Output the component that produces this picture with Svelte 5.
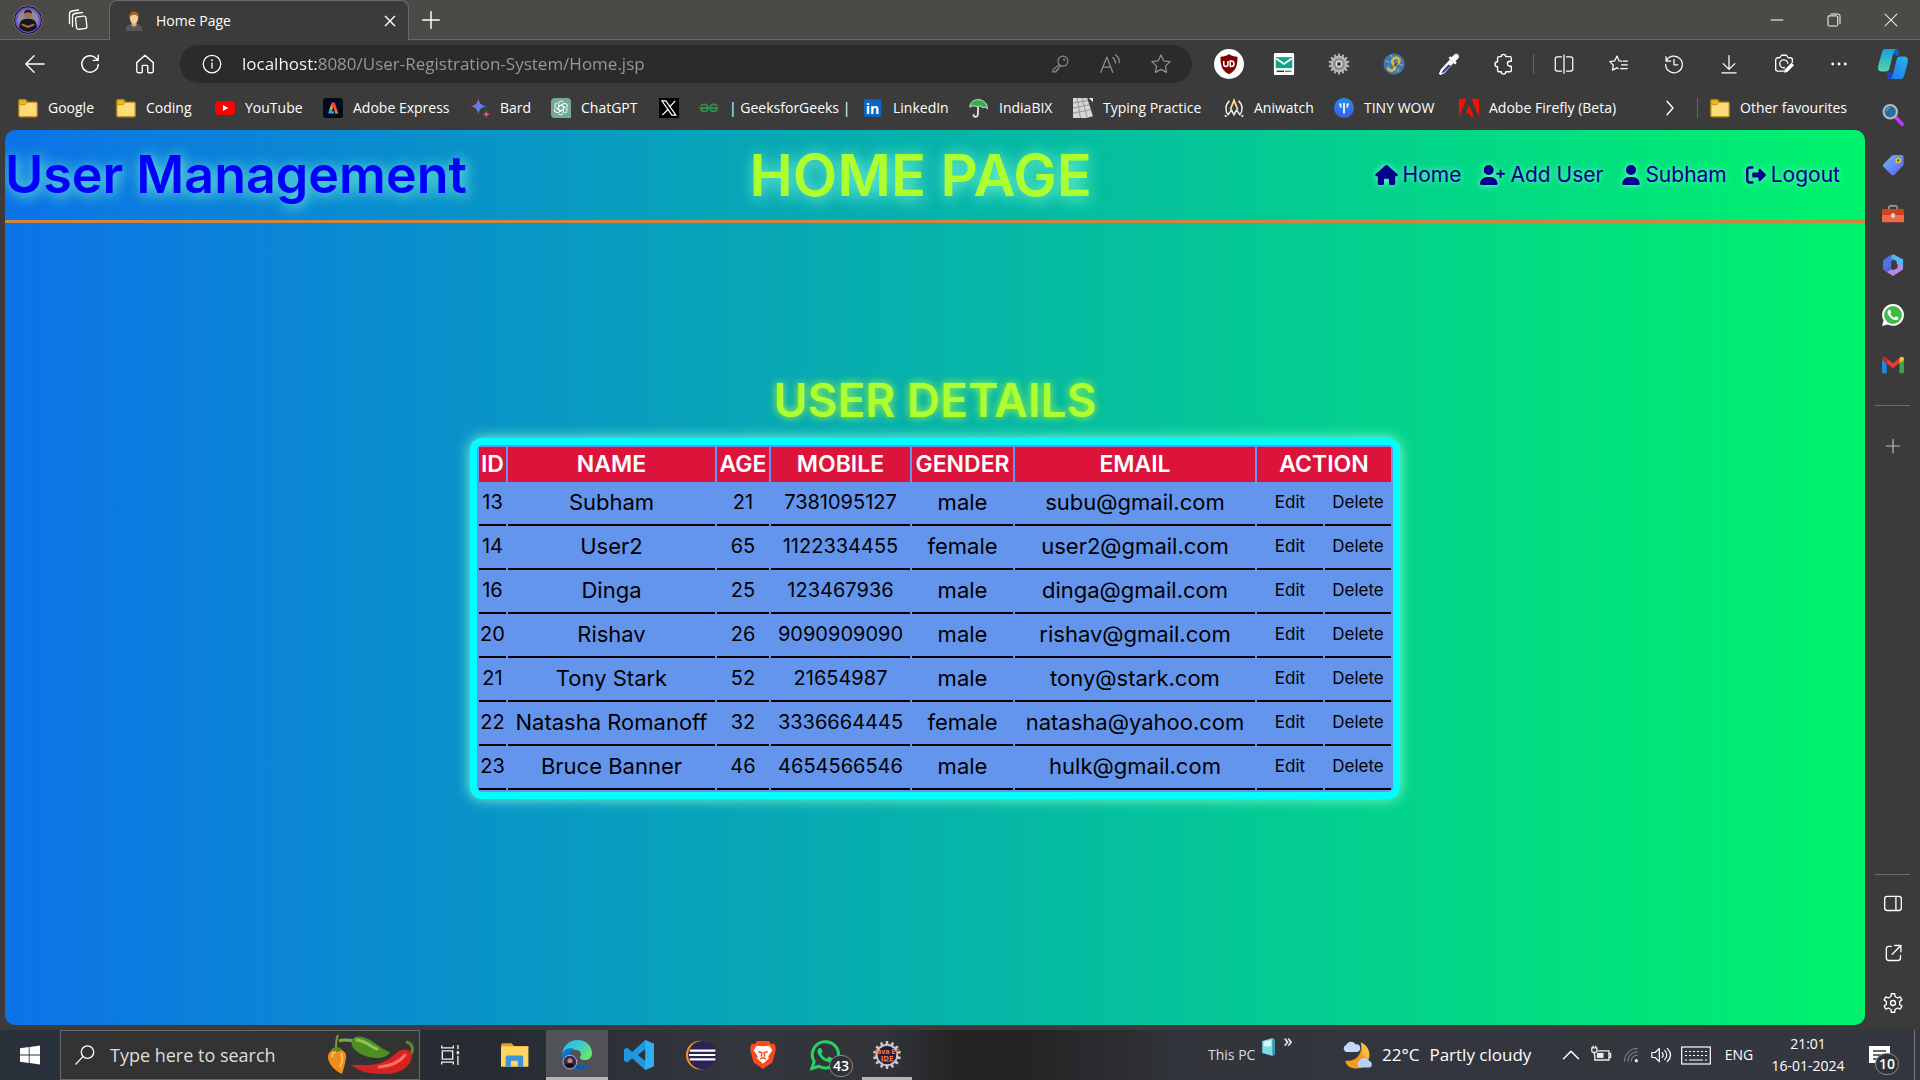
<script>
  function gear(teeth, outer, inner, cx = 12, cy = 12) {
    const step = (Math.PI * 2) / teeth;
    const points = [];
    for (let i = 0; i < teeth; i++) {
      for (const [offset, radius] of [[-0.28, inner], [-0.18, outer], [0.18, outer], [0.28, inner]]) {
        const a = (i + offset) * step - Math.PI / 2;
        points.push(`${(cx + radius * Math.cos(a)).toFixed(2)} ${(cy + radius * Math.sin(a)).toFixed(2)}`);
      }
    }
    return `M${points.join('L')}z`;
  }

  const spin = (count, shape) =>
    Array.from({ length: count }, (_, i) => `<g transform="rotate(${(360 / count) * i} 12 12)">${shape}</g>`).join('');

  const line = (body, width = 1.4) =>
    `<g fill="none" stroke="currentColor" stroke-width="${width}" stroke-linecap="round" stroke-linejoin="round">${body}</g>`;

  const phone =
    'M18.041 14.729c-.074-.124-.272-.198-.57-.347-.297-.149-1.758-.868-2.031-.967-.272-.099-.47-.149-.669.149-.198.297-.768.967-.941 1.165-.173.198-.347.223-.644.074-.297-.149-1.255-.462-2.39-1.475-.883-.788-1.48-1.761-1.653-2.059-.173-.297-.018-.458.13-.606.134-.133.297-.347.446-.521.151-.172.2-.296.3-.495.099-.198.05-.372-.025-.521-.075-.148-.669-1.611-.916-2.206-.242-.579-.487-.501-.669-.51l-.57-.01c-.198 0-.52.074-.792.372s-1.04 1.016-1.04 2.479 1.065 2.876 1.213 3.074c.149.198 2.095 3.2 5.076 4.487.709.306 1.263.489 1.694.626.712.226 1.36.194 1.872.118.571-.085 1.758-.719 2.006-1.413.248-.695.248-1.29.173-1.414z';
  const bubble =
    'M.057 24l1.687-6.163c-1.041-1.804-1.588-3.849-1.587-5.946.003-6.556 5.338-11.891 11.893-11.891 3.181.001 6.167 1.24 8.413 3.488 2.245 2.248 3.481 5.236 3.48 8.414-.003 6.557-5.338 11.892-11.893 11.892-1.99-.001-3.951-.5-5.688-1.448z';

  const art = {
    avatar: `<circle cx="12" cy="12" r="11.500" fill="#16121c" stroke="#77716e" stroke-width=".8"/><circle cx="12" cy="12" r="9.400" fill="#8d8a90" stroke="#6a52d8" stroke-width="1.800"/><path d="M5 18c0-5 2-7 7-7s7 2 7 7a9 9 0 0 1-14 0z" fill="#15151a"/><circle cx="12" cy="7.500" r="3" fill="#a86f55"/><path d="M8.800 7a3.200 3.200 0 0 1 6.400 0c-2-1.500-4.400-1.500-6.400 0z" fill="#1b1414"/><path d="M7 15.500l5 2 5-2" stroke="#a86f55" stroke-width="1.600" fill="none"/>`,
    stack: line('<rect x="10" y="8.500" width="10.500" height="12.500" rx="2.200" transform="rotate(-6 15 15)"/><path d="M6.500 18.500V8.500a3 3 0 0 1 2.500-3L16.500 4.500"/><path d="M3.500 15.500V6a3 3 0 0 1 2.500-3L12.500 2"/>', 1.3),
    person: `<path d="M2 24c0-6 3-8 7-8.500h6c4 .5 7 2.500 7 8.500z" fill="#55585c"/><path d="M9 12h6v5c-1 2-5 2-6 0z" fill="#e5aa72"/><ellipse cx="12" cy="8.500" rx="5" ry="6.500" fill="#f6cf9b"/><path d="M6.600 9C5.500 3 8 .5 12.500.5S18.500 4 17.400 9c-.8-3-2-4.500-5-4.500S7.500 6 6.600 9z" fill="#a76322"/>`,
    close: line('<path d="M5 5l14 14M19 5L5 19"/>', 2),
    thinClose: line('<path d="M4 4l16 16M20 4L4 20"/>', 1.4),
    plus: line('<path d="M12 3v18M3 12h18"/>', 1.6),
    minimise: line('<path d="M5 12h14"/>', 1.4),
    restore: line('<rect x="4" y="6.500" width="13" height="13.500" rx="1.500"/><path d="M8 4h9.500a2.500 2.500 0 0 1 2.500 2.500V17"/>', 1.3),
    back: line('<path d="M22 12H2.500M11 3L2 12l9 9"/>', 1.5),
    reload: line('<path d="M21 12.500a9 9 0 1 1-2.500-6.800L21 8M21 2.500V8h-5.500"/>', 1.5),
    home: line('<path d="M3 10.500L12 2.500l9 8V20a1.500 1.500 0 0 1-1.500 1.500H16a1 1 0 0 1-1-1V14.500a1 1 0 0 0-1-1h-4a1 1 0 0 0-1 1v6a1 1 0 0 1-1 1H4.500A1.500 1.500 0 0 1 3 20z"/>', 1.5),
    info: line('<circle cx="12" cy="12" r="10.500"/><path d="M12 11v6"/>', 1.5) + '<circle cx="12" cy="7.500" r="1.100" fill="currentColor"/>',
    key: line('<circle cx="15.500" cy="8.500" r="6"/><path d="M11 12.500L3.500 19v2.500h4V19h2.500v-2.500l3-2"/>', 1.4) + '<circle cx="17" cy="7" r="1.200" fill="currentColor"/>',
    readAloud: line('<path d="M2 21L8.500 4.500 15 21M4.500 15.500h8M15 5c2 1.500 3 3.500 3 6M18 2c2.800 2 4.200 5 4.200 8.500"/>', 1.4),
    star: line('<path d="M12 2.200l3 6.300 6.900.9-5 4.900 1.200 6.900L12 17.900l-6.100 3.300 1.200-6.900-5-4.900 6.900-.9z"/>', 1.4),
    ublock: `<circle cx="12" cy="12" r="12" fill="#fff"/><path d="M12 4c2 1.500 4 2 6.800 2.200 0 7-.8 10.800-6.800 14-6-3.200-6.800-7-6.800-14C8 6 10 5.500 12 4z" fill="#800000"/><path d="M7.800 9.500v2.700a1.700 1.700 0 0 0 3.400 0V9.500M13 9.500v4.400h.8a2.200 2.200 0 0 0 0-4.400z" fill="none" stroke="#fff" stroke-width="1.200"/>`,
    mail: `<rect x="1" y="0" width="22" height="24" rx="1.500" fill="#fff"/><rect x="3" y="4.500" width="18" height="12" fill="#12a38e"/><path d="M3.500 6l8.500 6 8.500-6" fill="none" stroke="#fff" stroke-width="2"/><path d="M4 20h8" stroke="#333" stroke-width="1.600"/><path d="M13 20h7" stroke="#12a38e" stroke-width="1.600"/>`,
    cog: `<path d="${gear(14, 11.5, 9)}" fill="#b9b7b4"/><circle cx="12" cy="12" r="6.500" fill="#8c8a88"/><circle cx="12" cy="12" r="3" fill="#3b3b3b" stroke="#e4e2df" stroke-width="1.600"/>`,
    snake: `<circle cx="12" cy="12" r="11.500" fill="#3f78ad"/><path d="M3 9l4 1M4 17l3-3M16 21l1-4M18 13h4M9 2l1 3" stroke="#9cc3e0" stroke-width="1"/><path d="M6 17.500c3 3.500 7.500 1 7-2.500-.5-2.500-3.500-3-3-6s4-5 6.500-3 1 5-1 5.500" fill="none" stroke="#e8b23a" stroke-width="3" stroke-linecap="round"/><path d="M12 14l4-3" stroke="#3d341f" stroke-width="1.300"/>`,
    picker: `<path d="M13 7l4 4-10 11-4.500 2-1.500-1.500L3 18z" fill="#fff"/><path d="M11.500 12.500l2.700 1.500L6.500 21.200l-2.500.8.700-2.500z" fill="#2b45b5"/><path d="M11.500 5.500l7 7 2-2-1.500-1.500 3.500-3.500a3.200 3.200 0 0 0-4-4.500l-3.700 3.500-1.300-1z" fill="#fff"/>`,
    puzzle: line('<path d="M9 4a2.500 2.500 0 0 1 5 0h4.500A1.500 1.500 0 0 1 20 5.500V9h-1.500a2.700 2.700 0 0 0 0 5.500H20V19a1.500 1.500 0 0 1-1.500 1.500H14a2.500 2.500 0 0 1-5 0H6.500A1.500 1.500 0 0 1 5 19v-4a2.700 2.700 0 0 1 0-5.500v-4A1.500 1.500 0 0 1 6.500 4z"/>', 1.5),
    split: line('<path d="M9 3.500H4A2.500 2.500 0 0 0 1.500 6v12A2.500 2.500 0 0 0 4 20.500h5M15 3.500h5A2.500 2.500 0 0 1 22.500 6v12a2.500 2.500 0 0 1-2.500 2.500h-5M12 1v22"/>', 1.5),
    favourites: line('<path d="M15 8.500l-3-.3L9.500 2.500 6.800 8.300l-5.900.9 4.300 4.200-1 6 5.300-2.800M15 13H22M14 17.500h8M17 8.500h5M9.500 16.600l1.500.9"/>', 1.5),
    history: line('<path d="M2.500 3v5.500H8M3 8.200A10 10 0 1 1 2 12.500M12 6.500V13h4.500"/>', 1.5),
    download: line('<path d="M12 2v16M5 11.500l7 7 7-7M3.500 22.500h17"/>', 1.5),
    camera: line('<path d="M12 20.500H4.500A2.500 2.500 0 0 1 2 18V7a2.500 2.500 0 0 1 2.500-2.500H7L9 1.500h6l2 3h2.500A2.500 2.500 0 0 1 22 7v3M12.500 16.500A4.800 4.800 0 1 1 16.500 11"/>', 1.6) + '<path d="M12 22.500l1-4 8-8 3 3-8 8z" fill="#fff"/>',
    dots: '<g fill="currentColor"><circle cx="4.500" cy="12" r="1.700"/><circle cx="12" cy="12" r="1.700"/><circle cx="19.500" cy="12" r="1.700"/></g>',
    copilot: `<defs><linearGradient id="cpA" x1="0" y1="0" x2="0" y2="1"><stop offset="0" stop-color="#11a0e8"/><stop offset="1" stop-color="#56d8a0"/></linearGradient><linearGradient id="cpB" x1="0" y1="1" x2="1" y2="0"><stop offset="0" stop-color="#1f6ff0"/><stop offset="1" stop-color="#22b8ee"/></linearGradient></defs><path d="M6 0h8c2 0 2 2 2.500 4H12L9 16c-.5 1.500-1.500 2-3 2H3C0 18-.3 15.500.3 13L3 3c.5-2 1-3 3-3z" fill="url(#cpA)"/><path d="M12 4l2-4c2 .3 2 2.500 2.600 6z" fill="#0a62c8"/><path d="M18 24h-8c-2 0-2-2-2.500-4H12l3-12c.5-1.500 1.500-2 3-2h3c3 0 3.300 2.500 2.700 5L21 21c-.5 2-1 3-3 3z" fill="url(#cpB)"/><path d="M7 18l5 2-1.500 4C8 24 7.600 21 7 18z" fill="#1d3fd8"/>`,
    folder: `<path d="M1 3.500A1.500 1.500 0 0 1 2.500 2H9l2 3h10.500A1.500 1.500 0 0 1 23 6.500V21a1.500 1.500 0 0 1-1.500 1.500h-19A1.500 1.500 0 0 1 1 21z" fill="#ffdb7a" stroke="#b98a12" stroke-width="1.500"/><path d="M1.500 2.500H9l1.500 2.500L8.500 8H1.500z" fill="#f0b918" stroke="#b98a12" stroke-width="1"/>`,
    youtube: `<rect x="0" y="3.500" width="24" height="17" rx="4.500" fill="#f00"/><path d="M9.500 8.500v7l6.500-3.500z" fill="#fff"/>`,
    adobeExpress: `<defs><linearGradient id="ax" x1="0" y1="1" x2="1" y2=".2"><stop offset="0" stop-color="#6a5cff"/><stop offset=".3" stop-color="#18b8f0"/><stop offset=".45" stop-color="#ffb300"/><stop offset=".65" stop-color="#ff3c3c"/><stop offset="1" stop-color="#e14bd8"/></linearGradient></defs><rect width="24" height="24" rx="4" fill="#000b1d"/><path d="M6 18.500L10.500 5.500h3.500l4.500 13H15l-2.800-8-1.700 5.500h2l1 2.500z" fill="url(#ax)"/>`,
    bard: `<defs><linearGradient id="bd" x1="0" y1="0" x2="1" y2="1"><stop offset=".2" stop-color="#e8547c"/><stop offset=".45" stop-color="#6a78e8"/><stop offset="1" stop-color="#3aa0f0"/></linearGradient></defs><path d="M10 0c1 6.500 3.500 9 10 10-6.500 1-9 3.500-10 10-1-6.500-3.500-9-10-10 6.500-1 9-3.500 10-10z" fill="url(#bd)"/><path d="M19.500 15c.5 3 1.500 4 4.500 4.500-3 .5-4 1.500-4.500 4.500-.5-3-1.500-4-4.500-4.500 3-.5 4-1.500 4.500-4.500z" fill="#d8607e"/>`,
    chatgpt: `<path d="M4.500 0h15A4.500 4.500 0 0 1 24 4.500V24H4.500A4.500 4.500 0 0 1 0 19.500v-15A4.500 4.500 0 0 1 4.500 0z" fill="#74aa9c"/><g fill="none" stroke="#fff" stroke-width="1.200" stroke-linejoin="round">${spin(6, '<path d="M9 13.700V7.200a3.400 3.400 0 0 1 6-2.200M9 10.300l5-2.900"/>')}</g>`,
    x: `<rect width="24" height="24" fill="#000"/><path d="M3.500 3.500h4.800l12 17h-4.800z" fill="none" stroke="#fff" stroke-width="1.400"/><path d="M19.500 3.500l-7 7.500M11 13.500L4 20.500" stroke="#fff" stroke-width="1.500"/>`,
    gfg: `<g fill="none" stroke="#2f8d46" stroke-width="2.200"><path d="M2 9.500C4 6.500 10.500 7 10.800 12c-.3 5.500-7.800 5.500-8.800 0H22c-1 5.500-8.500 5.500-8.800 0 .3-5 6.800-5.500 8.800-2.500"/></g>`,
    linkedin: `<rect x="1" y="1.500" width="21" height="21" rx="1.800" fill="#0a66c2"/><text x="3.300" y="19" font-family="Open Sans, sans-serif" font-weight="700" font-size="17" fill="#fff">in</text>`,
    umbrella: `<path d="M1 11C1 5 6 1.500 12 2c6 .5 10.500 5 10 11-2-2.500-4-2.500-5.500-1C15 9.500 12 9 10.500 11 8 9 3.500 9 1 11z" fill="#35b04a" stroke="#e8f5e8" stroke-width="1"/><path d="M11 11l-.5 9.500a2.500 2.500 0 0 1-5-1" fill="none" stroke="#d7ecd8" stroke-width="2.200"/>`,
    typing: `<path d="M0 0h17l7 22-8 2H0z" fill="#d5d5d5"/><path d="M0 6l18-3M0 12l20-4M0 18l22-4M5 0l4 24M11 0l6 24" stroke="#8c8c8c" stroke-width="1"/><path d="M19 0h5v5z" fill="#eee"/>`,
    aniwatch: `<path d="M6.500 3.500C1 8.500 1.500 16 5 20l4-5.500 3 5.500 3-5.500 4 5.500c3.500-4 4-11.500-1.500-16.500" fill="none" stroke="#eee" stroke-width="1.800"/><path d="M7.500 14L12 3l4.500 11" fill="none" stroke="#f4d68c" stroke-width="2.200"/><circle cx="2" cy="21.500" r="1.400" fill="#f4d68c"/><circle cx="22" cy="21.500" r="1.400" fill="#f4d68c"/>`,
    tinywow: `<defs><linearGradient id="tw" x1="0" y1="0" x2="0" y2="1"><stop offset="0" stop-color="#1e90f0"/><stop offset="1" stop-color="#3f5be8"/></linearGradient></defs><circle cx="12" cy="12" r="12" fill="url(#tw)"/><path d="M6 7.500h2v4M18 7.500h-2v4M12 6v12.500" fill="none" stroke="#fff" stroke-width="2"/>`,
    adobe: `<path d="M0 1h9L0 22.500zM15 1h9v21.500zM12 9l6 13.500h-4l-1.700-4.300H8z" fill="#fa0f00"/>`,
    next: line('<path d="M8 3l8 9-8 9"/>', 1.8),
    search: `<path d="M15.500 15l6.500 7" stroke="#c53af0" stroke-width="4" stroke-linecap="round"/><circle cx="9" cy="8.500" r="7.300" fill="#2b6c98" stroke="#b9bcbf" stroke-width="2.200"/><path d="M5 8a4 4 0 0 1 4-4" stroke="#5aa6d0" stroke-width="1.200" fill="none"/>`,
    tag: `<defs><linearGradient id="tg" x1="0" y1="0" x2="1" y2="1"><stop offset="0" stop-color="#6db8f5"/><stop offset="1" stop-color="#5b5ff5"/></linearGradient></defs><path d="M13 1h8.500A2 2 0 0 1 23.500 3v8c0 1-.3 1.500-1 2.200l-9 9.300c-1 1-2.200 1-3.200 0l-8.600-8.300c-1-1-1-2.200 0-3.200l9-9C11.500 1.300 12 1 13 1z" fill="url(#tg)"/><circle cx="17.700" cy="7" r="3" fill="#f7c41c"/><circle cx="17.700" cy="7" r="1.200" fill="#4a3a10"/>`,
    toolbox: `<path d="M7.500 6V4a2 2 0 0 1 2-2h5a2 2 0 0 1 2 2v2" fill="none" stroke="#9a9a9a" stroke-width="1.800"/><rect x="0" y="6" width="24" height="14" rx="1.500" fill="#f06a45"/><path d="M0 7a1 1 0 0 1 1-1h22a1 1 0 0 1 1 1v5H0z" fill="#d2401c"/><rect x="10" y="10" width="4" height="5" rx="1.500" fill="#ddd"/>`,
    m365: `<path d="M8 2l5-2 2 5-5 3v7.500L5 18l-4-3V7z" fill="#4f73e0"/><path d="M12 0l11 6v8l-7-3.500V8L10 4.500z" fill="#53b8f2"/><path d="M23 12.500V17l-11 7-8.500-5.500L8 16l5 1.500 4-2.500v-4.500z" fill="#b58ae8"/><path d="M1 13l4 2 5-2v4l-4 2.500L1 17z" fill="#5a62d8"/>`,
    whatsapp: `<path d="${bubble}" fill="#fff"/><circle cx="12" cy="12" r="9.700" fill="#3dbb46"/><path d="${phone}" fill="#fff"/>`,
    gmail: `<path d="M0 6l5 3.500V21H1.500A1.500 1.500 0 0 1 0 19.500z" fill="#1e88e5"/><path d="M24 6l-5 3.500V21h3.500a1.500 1.500 0 0 0 1.500-1.500z" fill="#43a047"/><path d="M5 4.500l7 5.500 7-5.500V10l-7 5.500L5 10z" fill="#e53935"/><path d="M0 6c0-3.500 3-3.500 5-1.800V10L0 6.500z" fill="#c62828"/><path d="M24 6c0-3.500-3-3.500-5-1.800V10l5-3.500z" fill="#fbc02d"/>`,
    panel: line('<rect x="2" y="4" width="20" height="17" rx="3"/><path d="M15.500 4v17"/>', 1.6),
    external: line('<path d="M10 4H7a3 3 0 0 0-3 3v11a3 3 0 0 0 3 3h11a3 3 0 0 0 3-3v-3M14 3h7.500v7.500M21.500 3L11 13.500"/>', 1.6),
    settings: line(`<path d="${gear(6, 11.3, 8.2)}"/><circle cx="12" cy="12" r="3"/>`, 1.6),
    windows: `<path d="M0 4l10.500-1.500v9H0zM11.500 2.300L24 .5v11H11.500zM0 12.500h10.500v9L0 20zM11.500 12.500H24v11L11.500 21.700z" fill="#fff"/>`,
    lens: line('<circle cx="15" cy="8.500" r="7.500"/><path d="M9.500 14L1 23"/>', 1.6),
    taskView: `<g fill="none" stroke="#eee" stroke-width="1.600"><path d="M2 .5v3h14v-3M2 23.500v-3h14v3M2.800 7h12.400v10H2.800zM21.500 0v5M21.500 13v11"/></g><rect x="20" y="7.500" width="3" height="3.500" fill="#eee"/>`,
    explorer: `<path d="M0 3.500A1.500 1.500 0 0 1 1.500 2H9l2.500 2.500H22A1.500 1.500 0 0 1 23.500 6H0z" fill="#e5a00d"/><path d="M0 6l1-1.500h22.500V22H0z" fill="#ffd560"/><path d="M4 22v-8a1.500 1.500 0 0 1 1.500-1.500h12A1.500 1.500 0 0 1 19 14v8h-4.500v-5h-6v5z" fill="#3a93dd"/>`,
    edge: `<defs><linearGradient id="eg" x1="0" y1="0" x2="1" y2=".6"><stop offset="0" stop-color="#2bb5ee"/><stop offset=".5" stop-color="#36c7d8"/><stop offset="1" stop-color="#6be56a"/></linearGradient></defs><path d="M0 12C.5 4.500 6 0 12.500 0 19.500 0 24 5 24 10.500c0 3.500-2.500 5.500-5.500 5.500-2.500 0-4.500-1-4-2.500 1.500-2 .5-5.500-3-5.500C6 7 1 9 0 12z" fill="url(#eg)"/><path d="M0 12C.5 8 5 5.500 9.500 7c-4 2-3.500 9-1 12 3 4 9 4.500 13.500.5C19.500 23 16 24 12.500 24 5 24 0 18.500 0 12z" fill="#1172c8"/><path d="M9 9c-3 4-1 10 4 11.500 4 1 7 0 9.500-2C20 23 15 24.500 11 23 5 21 4 13 9 9z" fill="#0c59a4"/><circle cx="6.300" cy="17.700" r="5.500" fill="#3a2a50" stroke="#c8b8d8" stroke-width=".7"/><circle cx="6.300" cy="16.500" r="2" fill="#c08a70"/><path d="M3 20.500c1-2.500 5.500-2.500 6.600 0-1.500 2-5 2-6.600 0z" fill="#111"/>`,
    vscode: `<path d="M17 0l7 3v18l-7 3L6.500 14.500 2.500 18 0 16.500V7.500L2.500 6 6.500 9.500zM17.500 7L11 12l6.500 5z" fill="#2197e4" fill-rule="evenodd"/><path d="M17 0l7 3v18l-7 3z" fill="#2fb0f5"/>`,
    eclipse: `<circle cx="11.500" cy="12" r="11.500" fill="#f7941e"/><circle cx="13" cy="12" r="11.300" fill="#2c2255"/><path d="M3 8.500h20.500M2.500 12h21M3 15.500h20.500" stroke="#fff" stroke-width="1.700"/>`,
    brave: `<path d="M7 0h10l2 2.500 3-.2 1 4-.5 3.200-2.500 9L12 24l-8-5.500-2.500-9L1 6.300l1-4 3 .2z" fill="#fb4a1c"/><path d="M12 4.500l5.500-.5 2.500 4-3.500 5 .5 2-5 4.500-5-4.500.5-2L4 8l2.500-4z" fill="#fff"/><path d="M8 9l3 1-.5 3.500M16 9l-3 1 .5 3.500M9.500 15.500L12 14.300l2.500 1.200" fill="none" stroke="#fb4a1c" stroke-width="1.300"/>`,
    whatsappLine: `<path d="M1.500 22.800l1.800-5.600A10.500 10.500 0 1 1 7.200 21z" fill="none" stroke="#25d366" stroke-width="2.400"/><path d="${phone}" fill="#25d366"/>`,
    javaee: `<path d="${gear(14, 12, 9.6)}" fill="#c9c9cc"/><circle cx="12" cy="12" r="8" fill="#241d4a"/><path d="M6 17.500h12" stroke="#555080" stroke-width="1"/><text x="12" y="11" text-anchor="middle" font-family="Open Sans, sans-serif" font-size="6" font-weight="700" fill="#f48124">Java EE</text><text x="12" y="17" text-anchor="middle" font-family="Open Sans, sans-serif" font-size="6.500" font-weight="700" fill="#f48124">IDE</text>`,
    server: `<path d="M3 4l14-4v24L3 20z" fill="#7fdbe6"/><path d="M17 0l3 2v20l-3 2z" fill="#2a9db8"/><path d="M5 5l10-2.500v8.500H5z" fill="#d9f7fa"/>`,
    weather: `<path d="M15 2c5 2 8 7 6.500 13S14 25 6 21.500c-2-1-3-3-3.500-5C12 18 17 10 15 2z" fill="#f39a1f"/><path d="M15 2c5 2 8 7 6.500 13l-5-3C17 8 16 5 15 2z" fill="#f8bd3c"/><path d="M3 9.500a3 3 0 0 1 .3-5.500A4.300 4.300 0 0 1 11 3.500a3 3 0 0 1 1 6z" fill="#c4d8fa"/><path d="M14 22a3 3 0 0 1 .2-5.500 4 4 0 0 1 7.300 0A3 3 0 0 1 22.500 22z" fill="#b6cff8"/>`,
    up: line('<path d="M2 17l10-10 10 10"/>', 2),
    battery: `<g fill="none" stroke="#eee" stroke-width="1.600"><path d="M8 7h13.500v11H4.500V12M22 10h1.500v5H22M4 12V9M1 3.500h6V7a2 2 0 0 1-2 2H3a2 2 0 0 1-2-2zM2.500 1v2.500M5.500 1v2.500"/></g><path d="M7 9.500h8v6H7z" fill="#eee"/>`,
    wifi: `<g fill="none" stroke="#8b8e93" stroke-width="1.500"><path d="M2 22A20 20 0 0 1 22 2M7 22A15 15 0 0 1 22 7M12 22a10 10 0 0 1 10-10"/></g><circle cx="20" cy="20.500" r="2.500" fill="#eee"/>`,
    sound: line('<path d="M1 9h4l5-5v16l-5-5H1zM13.500 9c1.500 2 1.500 4 0 6M16.500 6.500c3 3.500 3 7.500 0 11M19.500 4c5 5 5 11 0 16"/>', 1.4),
    keyboard: `<g fill="none" stroke="#fff" stroke-width="1.200"><rect x=".7" y="4" width="28.600" height="17"/><path d="M4 8.500h22M4 12.500h22" stroke-dasharray="2 2"/><path d="M4 17h2M8 17h14M24 17h2"/></g>`,
    notify: `<path d="M2 3h21v17h-9l-5 5v-5H2z" fill="#fff"/><path d="M6 8h13M6 12h13M6 16h9" stroke="#33363d" stroke-width="1.400"/>`,
    houseSolid: '<path fill="currentColor" d="M575.8 255.5c0 18-15 32.1-32 32.1h-32l.7 160.2c0 2.700-.2 5.400-.5 8.100V472c0 22.100-17.900 40-40 40H392c-22.100 0-40-17.900-40-40V384c0-17.700-14.300-32-32-32H256c-17.700 0-32 14.300-32 32v88c0 22.100-17.900 40-40 40H104c-22.100 0-40-17.900-40-40V287.600H32c-18 0-32-14-32-32.100c0-9 3-17 10-24L266.400 8c7-7 15-8 22-8s15 2 21 7L564.800 231.500c8 7 12 15 11 24z"/>',
    userPlus: '<path fill="currentColor" d="M96 128a128 128 0 1 1 256 0A128 128 0 1 1 96 128zM0 482.3C0 383.800 79.800 304 178.300 304h91.400C368.200 304 448 383.800 448 482.300c0 16.400-13.300 29.700-29.700 29.700H29.700C13.300 512 0 498.700 0 482.300zM504 312V248H440c-13.300 0-24-10.700-24-24s10.700-24 24-24h64V136c0-13.300 10.700-24 24-24s24 10.700 24 24v64h64c13.300 0 24 10.700 24 24s-10.700 24-24 24H552v64c0 13.300-10.700 24-24 24s-24-10.700-24-24z"/>',
    userSolid: '<path fill="currentColor" d="M224 256A128 128 0 1 0 224 0a128 128 0 1 0 0 256zm-45.700 48C79.800 304 0 383.800 0 482.300C0 498.700 13.300 512 29.700 512H418.300c16.400 0 29.700-13.300 29.700-29.700C448 383.800 368.200 304 269.700 304H178.300z"/>',
    signOut: '<path fill="currentColor" d="M377.900 105.900L500.700 228.700c7.200 7.200 11.300 17.100 11.300 27.300s-4.100 20.100-11.300 27.300L377.900 406.100c-6.400 6.400-15 9.900-24 9.900c-18.700 0-33.900-15.200-33.900-33.900l0-62.100-128 0c-17.700 0-32-14.300-32-32l0-64c0-17.700 14.300-32 32-32l128 0 0-62.100c0-18.700 15.200-33.900 33.900-33.900c9 0 17.600 3.600 24 9.900zM160 96L96 96c-17.700 0-32 14.300-32 32l0 256c0 17.700 14.300 32 32 32l64 0c17.700 0 32 14.300 32 32s-14.300 32-32 32l-64 0c-53 0-96-43-96-96L0 128C0 75 43 32 96 32l64 0c17.700 0 32 14.300 32 32s-14.300 32-32 32z"/>'
  };

  const bookmarks = [
    ['folder', 'Google'], ['folder', 'Coding'], ['youtube', 'YouTube'], ['adobeExpress', 'Adobe Express'],
    ['bard', 'Bard'], ['chatgpt', 'ChatGPT'], ['x', ''], ['gfg', '| GeeksforGeeks |'], ['linkedin', 'LinkedIn'],
    ['umbrella', 'IndiaBIX'], ['typing', 'Typing Practice'], ['aniwatch', 'Aniwatch'], ['tinywow', 'TINY WOW'],
    ['adobe', 'Adobe Firefly (Beta)']
  ];
  const extensions = [
    ['mail', 'Mail'], ['cog', 'Options'], ['snake', 'Editor'], ['picker', 'Colour picker'], ['puzzle', 'Extensions']
  ];
  const tools = [
    ['split', 'Split screen'], ['favourites', 'Favourites'], ['history', 'History'], ['download', 'Downloads'],
    ['camera', 'Screenshot'], ['dots', 'Settings and more']
  ];
  const sideApps = [
    ['search', 'Search'], ['tag', 'Shopping'], ['toolbox', 'Tools'], ['m365', 'Microsoft 365'],
    ['whatsapp', 'WhatsApp'], ['gmail', 'Gmail']
  ];
  const sideTools = [['panel', 'Sidebar'], ['external', 'Open link'], ['settings', 'Settings']];
  const links = [
    ['houseSolid', 'Home', 576, 23], ['userPlus', 'Add User', 640, 25],
    ['userSolid', 'Subham', 448, 18], ['signOut', 'Logout', 512, 20]
  ];
  const headings = ['ID', 'NAME', 'AGE', 'MOBILE', 'GENDER', 'EMAIL'];
  const users = [
    [13, 'Subham', 21, '7381095127', 'male', 'subu@gmail.com'],
    [14, 'User2', 65, '1122334455', 'female', 'user2@gmail.com'],
    [16, 'Dinga', 25, '123467936', 'male', 'dinga@gmail.com'],
    [20, 'Rishav', 26, '9090909090', 'male', 'rishav@gmail.com'],
    [21, 'Tony Stark', 52, '21654987', 'male', 'tony@stark.com'],
    [22, 'Natasha Romanoff', 32, '3336664445', 'female', 'natasha@yahoo.com'],
    [23, 'Bruce Banner', 46, '4654566546', 'male', 'hulk@gmail.com']
  ];
</script>

{#snippet icon(name, size = 20, width = 24)}
  <svg class="icon s{size}" viewBox="0 0 {width} 24" aria-hidden="true">{@html art[name]}</svg>
{/snippet}

<div class="desktop">
  <div class="tabs">
    <button class="profile" aria-label="Profile">{@render icon('avatar', 30)}</button>
    <button class="workspaces" aria-label="Tab actions">{@render icon('stack', 24)}</button>
    <div class="tab">
      {@render icon('person', 20)}
      <span>Home Page</span>
      <button aria-label="Close tab">{@render icon('close', 16)}</button>
    </div>
    <button class="new-tab" aria-label="New tab">{@render icon('plus', 22)}</button>
    <div class="window-buttons">
      <button aria-label="Minimise">{@render icon('minimise', 20)}</button>
      <button aria-label="Restore">{@render icon('restore', 18)}</button>
      <button aria-label="Close">{@render icon('thinClose', 18)}</button>
    </div>
  </div>

  <div class="toolbar">
    <button class="tool" aria-label="Back">{@render icon('back', 22)}</button>
    <button class="tool" aria-label="Refresh">{@render icon('reload', 22)}</button>
    <button class="tool" aria-label="Home">{@render icon('home', 22)}</button>
    <div class="address">
      <button aria-label="Site information">{@render icon('info', 20)}</button>
      <input aria-label="Address" value="localhost:8080/User-Registration-System/Home.jsp" />
      <button class="dim" aria-label="Passwords">{@render icon('key', 20)}</button>
      <button class="dim" aria-label="Read aloud">{@render icon('readAloud', 22)}</button>
      <button class="dim" aria-label="Add to favourites">{@render icon('star', 22)}</button>
    </div>
    <button class="tool shield" aria-label="Blocker">{@render icon('ublock', 30)}</button>
    {#each extensions as [name, label]}
      <button class="tool" aria-label={label}>{@render icon(name, 22)}</button>
    {/each}
    <span class="bar"></span>
    {#each tools as [name, label]}
      <button class="tool" aria-label={label}>{@render icon(name, 20)}</button>
    {/each}
    <button class="tool copilot" aria-label="Copilot">{@render icon('copilot', 30)}</button>
  </div>

  <div class="body">
    <div class="content">
      <nav class="bookmarks" aria-label="Favourites bar">
        <div class="saved">
          {#each bookmarks as [name, label]}
            <a href="#bookmark" aria-label={label || 'X'}>{@render icon(name, 20)}{#if label}<span>{label}</span>{/if}</a>
          {/each}
        </div>
        <button class="more" aria-label="More favourites">{@render icon('next', 18)}</button>
        <span class="bar"></span>
        <a href="#other">{@render icon('folder', 20)}<span>Other favourites</span></a>
      </nav>

      <main class="page">
        <header>
          <div class="brand">User Management</div>
          <h1>HOME PAGE</h1>
          <nav class="links" aria-label="Main">
            {#each links as [name, label, width, shown]}
              <a href="#{label}">
                <svg viewBox="0 0 {width} 512" style="width: {shown}px" aria-hidden="true">{@html art[name]}</svg>
                <span>{label}</span>
              </a>
            {/each}
          </nav>
        </header>
        <section>
          <h2>USER DETAILS</h2>
          <table>
            <colgroup>
              <col class="id" /><col class="name" /><col class="age" /><col class="mobile" />
              <col class="gender" /><col class="email" /><col class="act" /><col class="act" />
            </colgroup>
            <thead>
              <tr>
                {#each headings as text}<th>{text}</th>{/each}
                <th colspan="2">ACTION</th>
              </tr>
            </thead>
            <tbody>
              {#each users as user}
                <tr>
                  {#each user as value, i}<td class:words={i % 2 === 1 && i !== 3 || i === 4}>{value}</td>{/each}
                  <td><a href="#edit">Edit</a></td>
                  <td><a href="#delete">Delete</a></td>
                </tr>
              {/each}
            </tbody>
          </table>
        </section>
      </main>
    </div>

    <aside>
      {#each sideApps as [name, label]}
        <button aria-label={label}>{@render icon(name, 22)}</button>
      {/each}
      <hr />
      <button class="add" aria-label="Customise">{@render icon('plus', 18)}</button>
      <span class="spacer"></span>
      <hr />
      {#each sideTools as [name, label]}
        <button aria-label={label}>{@render icon(name, 20)}</button>
      {/each}
    </aside>
  </div>

  <footer>
    <button class="start" aria-label="Start">{@render icon('windows', 20)}</button>
    <div class="finder">
      {@render icon('lens', 20)}
      <input aria-label="Search" placeholder="Type here to search" />
      <svg class="chillies" viewBox="0 0 88 42" aria-hidden="true">
        <path d="M9 14C9 8 9 5 11 1" fill="none" stroke="#7d9a3a" stroke-width="2" />
        <path d="M1 23c0-5 4-8 9-8s10 3 9 9c-1 6-2 10-4 16-5-2-14-9-14-17z" fill="#f08c1a" />
        <path d="M5 23c0-3 2-5 4-5M14 19c2 4 1 10-1 14" fill="none" stroke="#ffc36b" stroke-width="2" />
        <path d="M4 16c2-4 9-4 11 0l-5 2z" fill="#5d8a28" />
        <path d="M12 7c5-2 10-1 15 0" fill="none" stroke="#8aa54a" stroke-width="3" />
        <path d="M25 6c3-5 11-4 18 0 7 4 13 10 20 12-4 8-18 7-27 3S23 12 25 6z" fill="#4f8f22" />
        <path d="M30 6c9 1 12 6 20 9" fill="none" stroke="#8fc457" stroke-width="3" stroke-linecap="round" />
        <path d="M79 8c6 1 8 6 5 12" fill="none" stroke="#5f8a34" stroke-width="3" />
        <path d="M84 18c4 9-6 22-26 22-14 0-26-2-34-9 14 0 26 1 36-5 9-5 14-15 24-8z" fill="#d62222" />
        <path d="M78 21c-6 8-14 11-26 12" fill="none" stroke="#ff6f62" stroke-width="3" stroke-linecap="round" />
      </svg>
    </div>
    <button class="app views" aria-label="Task view">{@render icon('taskView', 20)}</button>
    <button class="app" aria-label="File Explorer">{@render icon('explorer', 28)}</button>
    <button class="app active" aria-label="Microsoft Edge">{@render icon('edge', 30)}</button>
    <button class="app" aria-label="Visual Studio Code">{@render icon('vscode', 30)}</button>
    <button class="app" aria-label="Eclipse">{@render icon('eclipse', 30)}</button>
    <button class="app" aria-label="Brave">{@render icon('brave', 28)}</button>
    <button class="app" aria-label="WhatsApp">{@render icon('whatsappLine', 30)}<span class="badge">43</span></button>
    <button class="app running" aria-label="Eclipse Java EE">{@render icon('javaee', 28)}</button>

    <div class="shortcut"><span>This PC</span>{@render icon('server', 18)}<b>»</b></div>
    <button class="weather">{@render icon('weather', 30)}<span>22°C</span><span>Partly cloudy</span></button>
    <button class="tray" aria-label="Hidden icons">{@render icon('up', 18)}</button>
    <button class="tray" aria-label="Battery">{@render icon('battery', 20)}</button>
    <button class="tray" aria-label="Network">{@render icon('wifi', 16)}</button>
    <button class="tray" aria-label="Volume">{@render icon('sound', 20)}</button>
    <button class="keys" aria-label="Touch keyboard">{@render icon('keyboard', 30, 30)}</button>
    <button class="lang">ENG</button>
    <button class="clock"><span>21:01</span><span>16-01-2024</span></button>
    <button class="notes" aria-label="Notifications">{@render icon('notify', 24)}<span class="badge">10</span></button>
    <span class="peek"></span>
  </footer>
</div>

<style>
  :global(body) { margin: 0; background: #3b3b3b; }
  * { box-sizing: border-box; }
  .desktop {
    display: flex;
    flex-direction: column;
    min-height: 100vh;
    background: #3b3b3b;
    color: #fff;
    font: 14px/20px "Open Sans", "Noto Sans", sans-serif;
  }
  button {
    display: flex;
    flex: none;
    align-items: center;
    justify-content: center;
    padding: 0;
    border: 0;
    background: none;
    color: inherit;
    font: inherit;
  }
  input { min-width: 0; border: 0; outline: 0; padding: 0; background: none; color: inherit; font: inherit; }
  a { color: inherit; text-decoration: none; white-space: nowrap; }
  .icon { display: block; flex: none; width: 20px; height: 20px; overflow: visible; }
  .s16 { width: 16px; height: 16px; }
  .s18 { width: 18px; height: 18px; }
  .s22 { width: 22px; height: 22px; }
  .s24 { width: 24px; height: 24px; }
  .s28 { width: 28px; height: 28px; }
  .s30 { width: 30px; height: 30px; }
  .bar { flex: none; width: 1px; height: 20px; background: #666; }

  .tabs { display: flex; height: 40px; background: #4b4a47; box-shadow: inset 0 -1px #6b6a68; }
  .profile { width: 56px; }
  .workspaces { width: 44px; margin-right: 9px; }
  .tab {
    display: flex;
    align-items: center;
    gap: 12px;
    width: 300px;
    padding: 0 10px 0 14px;
    border: 1px solid #6b6a68;
    border-bottom: 0;
    border-radius: 8px 8px 0 0;
    background: #3b3b3b;
  }
  .tab span { flex: 1; }
  .new-tab { width: 44px; }
  .window-buttons { display: flex; margin-left: auto; padding-right: 1px; }
  .window-buttons button { width: 57px; }

  .toolbar { display: flex; align-items: center; height: 48px; padding-left: 7px; }
  .tool { flex: none; width: 55px; height: 40px; }
  .toolbar .bar { margin: 0 2px; }
  .address {
    display: flex;
    align-items: center;
    flex: 1;
    height: 38px;
    margin-left: 8px;
    padding: 0 20px 0 22px;
    border-radius: 19px;
    background: #2b2b2b;
  }
  .address input {
    flex: 1;
    margin-left: 20px;
    font-size: 17px;
    line-height: 24px;
    color: transparent;
    background: linear-gradient(to right, #fff 76px, #9a9a9a 76px);
    background-clip: text;
    -webkit-background-clip: text;
  }
  .dim { color: #8f8f8f; margin-left: 29px; }
  .shield { margin-left: 9px; }
  .copilot { width: 54px; }

  .body { display: flex; flex: 1; padding-left: 5px; }
  .content { display: flex; flex-direction: column; flex: 1; min-width: 0; padding-bottom: 5px; }
  .bookmarks { display: flex; align-items: center; gap: 20px; height: 42px; padding: 0 18px 2px 13px; }
  .saved {
    display: grid;
    grid-template-columns: 78px 79px 88px 127px 61px 88px 20px 144px 86px 84px 131px 90px 105px auto;
    column-gap: 20px;
  }
  .bookmarks a { display: flex; align-items: center; gap: 10px; }
  .more { margin-left: auto; }
  .bookmarks .bar { margin: 0 -8px 0 -2px; }

  .page {
    flex: 1;
    overflow: hidden;
    border-radius: 10px;
    background: linear-gradient(to right, #0c73e8, #00f36c);
    color: #000;
    font-family: Inter, sans-serif;
  }
  header {
    display: flex;
    align-items: center;
    justify-content: space-between;
    height: 93px;
    padding-right: 25px;
    border-bottom: 3px solid #cd853f;
  }
  .brand { color: #00f; font-size: 52px; font-weight: 600; line-height: 72px; text-shadow: 2px 2px 14px #7fffd4; }
  h1 { margin: 0; color: #adff2f; font-size: 58px; font-weight: 600; line-height: 72px; text-shadow: 2px 2px 16px #7fffd4; }
  .links { display: flex; gap: 19px; color: #00008b; font-size: 21px; line-height: 30px; text-shadow: 0 0 6px #7fffd4; }
  .links a { display: flex; align-items: center; gap: 5px; }
  .links svg { height: 20px; filter: drop-shadow(0 0 3px #7fffd4); }

  section { display: flex; flex-direction: column; align-items: center; padding-top: 159px; }
  h2 { margin: 0 0 20px; color: #adff2f; font-size: 46px; font-weight: 600; line-height: 36px; text-shadow: 0 0 8px #adff2f; }
  table {
    width: 930px;
    table-layout: fixed;
    border: 7px solid #0ff;
    border-radius: 12px;
    border-spacing: 2px;
    background: #6495ed;
    box-shadow: 0 0 14px #7fffd4;
    text-align: center;
    font-size: 20px;
  }
  .id { width: 27px; }
  .name { width: 207px; }
  .age { width: 52px; }
  .mobile { width: 139px; }
  .gender { width: 101px; }
  .email { width: 240px; }
  .act { width: 66px; }
  th { height: 35px; padding: 0; background: #dc143c; color: #fff; font-size: 23px; font-weight: 600; line-height: 35px; }
  td { height: 42px; padding: 0 0 4px; border-bottom: 2px solid #000; line-height: 36px; white-space: nowrap; }
  .words { font-size: 22px; }
  td a { display: block; font-size: 17px; }

  aside { display: flex; flex-direction: column; align-items: center; width: 55px; padding: 2px 0 2px; }
  aside button { width: 50px; height: 50px; }
  aside hr { width: 35px; height: 1px; margin: 15px 0; border: 0; background: #6c6c6c; }
  aside .add { color: #bbb; }
  .spacer { flex: 1; }
  aside .spacer + hr { margin: 0 0 3px; }

  footer {
    display: flex;
    height: 50px;
    background: linear-gradient(to right, #29313b, #262b32 25%, #33363c 38%, #32343a 46%, #232323 50%, #232323 53%, #32353c 62%, #34373f);
  }
  .start { width: 60px; }
  .finder {
    display: flex;
    flex: none;
    align-items: center;
    gap: 15px;
    width: 360px;
    padding: 0 4px 0 14px;
    border: 1px solid #696969;
    background: #333;
  }
  .finder input { flex: 1; font-size: 18px; line-height: 24px; }
  .finder input::placeholder { color: #ddd; opacity: 1; }
  .chillies { flex: none; width: 88px; height: 42px; }
  .app { position: relative; width: 62px; }
  .views { width: 64px; padding-right: 4px; }
  .active { background: #505258; box-shadow: inset 0 -3px #b8b4b2; }
  .running::after { content: ""; position: absolute; bottom: 0; width: 50px; height: 3px; background: #b8b4b2; }
  .badge {
    position: absolute;
    right: 3px;
    bottom: 3px;
    width: 24px;
    height: 22px;
    border: 1px solid #8b8b8b;
    border-radius: 12px;
    background: #2f3237;
    font-size: 14px;
    font-weight: 600;
    line-height: 20px;
    text-align: center;
  }
  .shortcut { display: flex; align-items: center; gap: 5px; width: 124px; margin-left: auto; color: #ddd; }
  .shortcut .icon { margin-bottom: 16px; }
  .shortcut b { margin-bottom: 30px; font-size: 18px; font-weight: 400; color: #fff; }
  .weather { justify-content: start; gap: 10px; width: 224px; padding-left: 10px; font-size: 17px; }
  .tray { width: 30px; }
  .keys { width: 40px; }
  .lang { width: 46px; }
  .clock { flex-direction: column; gap: 2px; width: 92px; }
  .notes { position: relative; width: 60px; padding-right: 10px; }
  .notes .badge { right: 15px; bottom: 5px; }
  .peek { width: 6px; border-left: 1px solid #777; }
</style>
